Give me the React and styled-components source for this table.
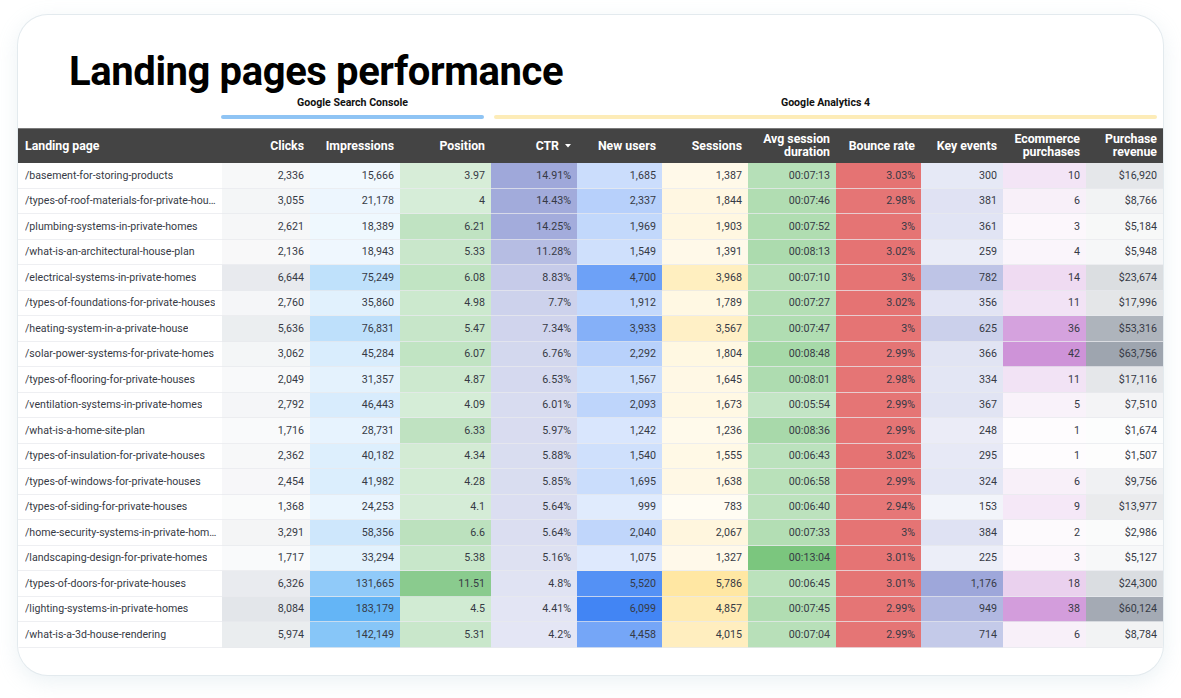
import React from 'react';
import styled, { createGlobalStyle } from 'styled-components';

const GlobalStyle = createGlobalStyle`
  body {
    margin: 0;
    background: #ffffff;
    font-family: Roboto, 'Liberation Sans', Arial, sans-serif;
  }
`;

// column widths, landing page first
const COLS = '204px 88px 90px 91px 86px 85px 86px 88px 85px 82px 83px 77px';

const Page = styled.div`
  padding: 15px 18px 23px;
`;

const Card = styled.div`
  width: 1145px;
  background: #ffffff;
  border-radius: 30px;
  box-shadow: 0 0 0 1px #e3eaee, 0 6px 22px rgba(150, 185, 200, 0.2);
  padding: 33px 0 27px;
  overflow: hidden;
`;

const Title = styled.h1`
  margin: 0;
  padding-left: 51px;
  font-size: 40px;
  line-height: 48px;
  font-weight: 700;
  color: #000000;
  letter-spacing: -0.4px;
`;

const GroupRow = styled.div`
  display: grid;
  grid-template-columns: ${COLS};
  margin-bottom: 9px;
`;

const Group = styled.div`
  grid-column: ${(p) => p.$col};
  margin: ${(p) => p.$margin};
  display: flex;
  flex-direction: column;
  align-items: center;
  gap: 5px;
`;

const GroupLabel = styled.span`
  font-size: 10.6px;
  line-height: 14px;
  font-weight: 700;
  color: #111111;
`;

const GroupBar = styled.div`
  width: 100%;
  height: 4px;
  border-radius: 2px;
  background: ${(p) => p.$color};
`;

const HeadRow = styled.div`
  display: grid;
  grid-template-columns: ${COLS};
  height: 35px;
  background: #444444;
  border-top: 1px solid #7a7a7a;
  box-sizing: border-box;
`;

const HeadCell = styled.div`
  display: flex;
  align-items: center;
  justify-content: ${(p) => (p.$left ? 'flex-start' : 'flex-end')};
  text-align: ${(p) => (p.$left ? 'left' : 'right')};
  padding: ${(p) => (p.$left ? '0 6px 0 7px' : '0 6px')};
  font-size: 12.3px;
  line-height: 13px;
  font-weight: 700;
  color: #ffffff;
  gap: 6px;
`;

const Row = styled.div`
  display: grid;
  grid-template-columns: ${COLS};
  height: 25.5px;
`;

const Cell = styled.div`
  display: flex;
  align-items: center;
  justify-content: flex-end;
  padding: 0 6px;
  font-size: 10.7px;
  color: #363a45;
  border-bottom: 1px solid rgba(232, 234, 237, 0.75);
  white-space: nowrap;
  min-width: 0;
`;

const PageCell = styled(Cell)`
  justify-content: flex-start;
  padding: 0 5px 0 7px;
  font-size: 10.6px;
  background: #ffffff;

  span {
    overflow: hidden;
    text-overflow: ellipsis;
  }
`;

const SortArrow = () => (
  <svg width="6" height="4" viewBox="0 0 6 4">
    <path d="M0 0 H6 L3 3.5 Z" fill="#ffffff" />
  </svg>
);

const heads = [
  'Clicks',
  'Impressions',
  'Position',
  'CTR',
  'New users',
  'Sessions',
  'Avg session duration',
  'Bounce rate',
  'Key events',
  'Ecommerce purchases',
  'Purchase revenue',
];

// max colour for each metric column
const scale = [
  [227, 230, 234],
  [100, 181, 246],
  [138, 203, 142],
  [159, 168, 218],
  [66, 133, 244],
  [255, 231, 163],
  [123, 198, 126],
  [229, 115, 115],
  [158, 167, 218],
  [206, 147, 216],
  [158, 165, 175],
];

const rows = [
  ['/basement-for-storing-products', '2,336', '15,666', '3.97', '14.91%', '1,685', '1,387', '00:07:13', '3.03%', '300', '10', '$16,920'],
  ['/types-of-roof-materials-for-private-houses', '3,055', '21,178', '4', '14.43%', '2,337', '1,844', '00:07:46', '2.98%', '381', '6', '$8,766'],
  ['/plumbing-systems-in-private-homes', '2,621', '18,389', '6.21', '14.25%', '1,969', '1,903', '00:07:52', '3%', '361', '3', '$5,184'],
  ['/what-is-an-architectural-house-plan', '2,136', '18,943', '5.33', '11.28%', '1,549', '1,391', '00:08:13', '3.02%', '259', '4', '$5,948'],
  ['/electrical-systems-in-private-homes', '6,644', '75,249', '6.08', '8.83%', '4,700', '3,968', '00:07:10', '3%', '782', '14', '$23,674'],
  ['/types-of-foundations-for-private-houses', '2,760', '35,860', '4.98', '7.7%', '1,912', '1,789', '00:07:27', '3.02%', '356', '11', '$17,996'],
  ['/heating-system-in-a-private-house', '5,636', '76,831', '5.47', '7.34%', '3,933', '3,567', '00:07:47', '3%', '625', '36', '$53,316'],
  ['/solar-power-systems-for-private-homes', '3,062', '45,284', '6.07', '6.76%', '2,292', '1,804', '00:08:48', '2.99%', '366', '42', '$63,756'],
  ['/types-of-flooring-for-private-houses', '2,049', '31,357', '4.87', '6.53%', '1,567', '1,645', '00:08:01', '2.98%', '334', '11', '$17,116'],
  ['/ventilation-systems-in-private-homes', '2,792', '46,443', '4.09', '6.01%', '2,093', '1,673', '00:05:54', '2.99%', '367', '5', '$7,510'],
  ['/what-is-a-home-site-plan', '1,716', '28,731', '6.33', '5.97%', '1,242', '1,236', '00:08:36', '2.99%', '248', '1', '$1,674'],
  ['/types-of-insulation-for-private-houses', '2,362', '40,182', '4.34', '5.88%', '1,540', '1,555', '00:06:43', '3.02%', '295', '1', '$1,507'],
  ['/types-of-windows-for-private-houses', '2,454', '41,982', '4.28', '5.85%', '1,695', '1,638', '00:06:58', '2.99%', '324', '6', '$9,756'],
  ['/types-of-siding-for-private-houses', '1,368', '24,253', '4.1', '5.64%', '999', '783', '00:06:40', '2.94%', '153', '9', '$13,977'],
  ['/home-security-systems-in-private-homes', '3,291', '58,356', '6.6', '5.64%', '2,040', '2,067', '00:07:33', '3%', '384', '2', '$2,986'],
  ['/landscaping-design-for-private-homes', '1,717', '33,294', '5.38', '5.16%', '1,075', '1,327', '00:13:04', '3.01%', '225', '3', '$5,127'],
  ['/types-of-doors-for-private-houses', '6,326', '131,665', '11.51', '4.8%', '5,520', '5,786', '00:06:45', '3.01%', '1,176', '18', '$24,300'],
  ['/lighting-systems-in-private-homes', '8,084', '183,179', '4.5', '4.41%', '6,099', '4,857', '00:07:45', '2.99%', '949', '38', '$60,124'],
  ['/what-is-a-3d-house-rendering', '5,974', '142,149', '5.31', '4.2%', '4,458', '4,015', '00:07:04', '2.99%', '714', '6', '$8,784'],
];

const toNumber = (s) => {
  if (s.includes(':')) {
    const [h, m, sec] = s.split(':').map(Number);
    return h * 3600 + m * 60 + sec;
  }
  return parseFloat(s.replace(/[$,%]/g, ''));
};

const maxes = heads.map((_, i) => Math.max(...rows.map((r) => toNumber(r[i + 1]))));

const heat = (value, i) => {
  const t = value / maxes[i];
  const [r, g, b] = scale[i];
  const mix = (c) => Math.round(255 - t * (255 - c));
  return `rgb(${mix(r)}, ${mix(g)}, ${mix(b)})`;
};

const App = () => (
  <Page>
    <GlobalStyle />
    <Card>
      <Title>Landing pages performance</Title>

      <GroupRow>
        <Group $col="2 / span 3" $margin="0 7px 0 -1px">
          <GroupLabel>Google Search Console</GroupLabel>
          <GroupBar $color="#8fc4f4" />
        </Group>
        <Group $col="5 / span 8" $margin="0 6px 0 3px">
          <GroupLabel>Google Analytics 4</GroupLabel>
          <GroupBar $color="#fdecb8" />
        </Group>
      </GroupRow>

      <HeadRow>
        <HeadCell $left>Landing page</HeadCell>
        {heads.map((h) => (
          <HeadCell key={h}>
            {h}
            {h === 'CTR' && <SortArrow />}
          </HeadCell>
        ))}
      </HeadRow>

      {rows.map((r) => (
        <Row key={r[0]}>
          <PageCell>
            <span>{r[0]}</span>
          </PageCell>
          {r.slice(1).map((v, i) => (
            <Cell key={i} style={{ background: heat(toNumber(v), i) }}>
              {v}
            </Cell>
          ))}
        </Row>
      ))}
    </Card>
  </Page>
);

export default App;
